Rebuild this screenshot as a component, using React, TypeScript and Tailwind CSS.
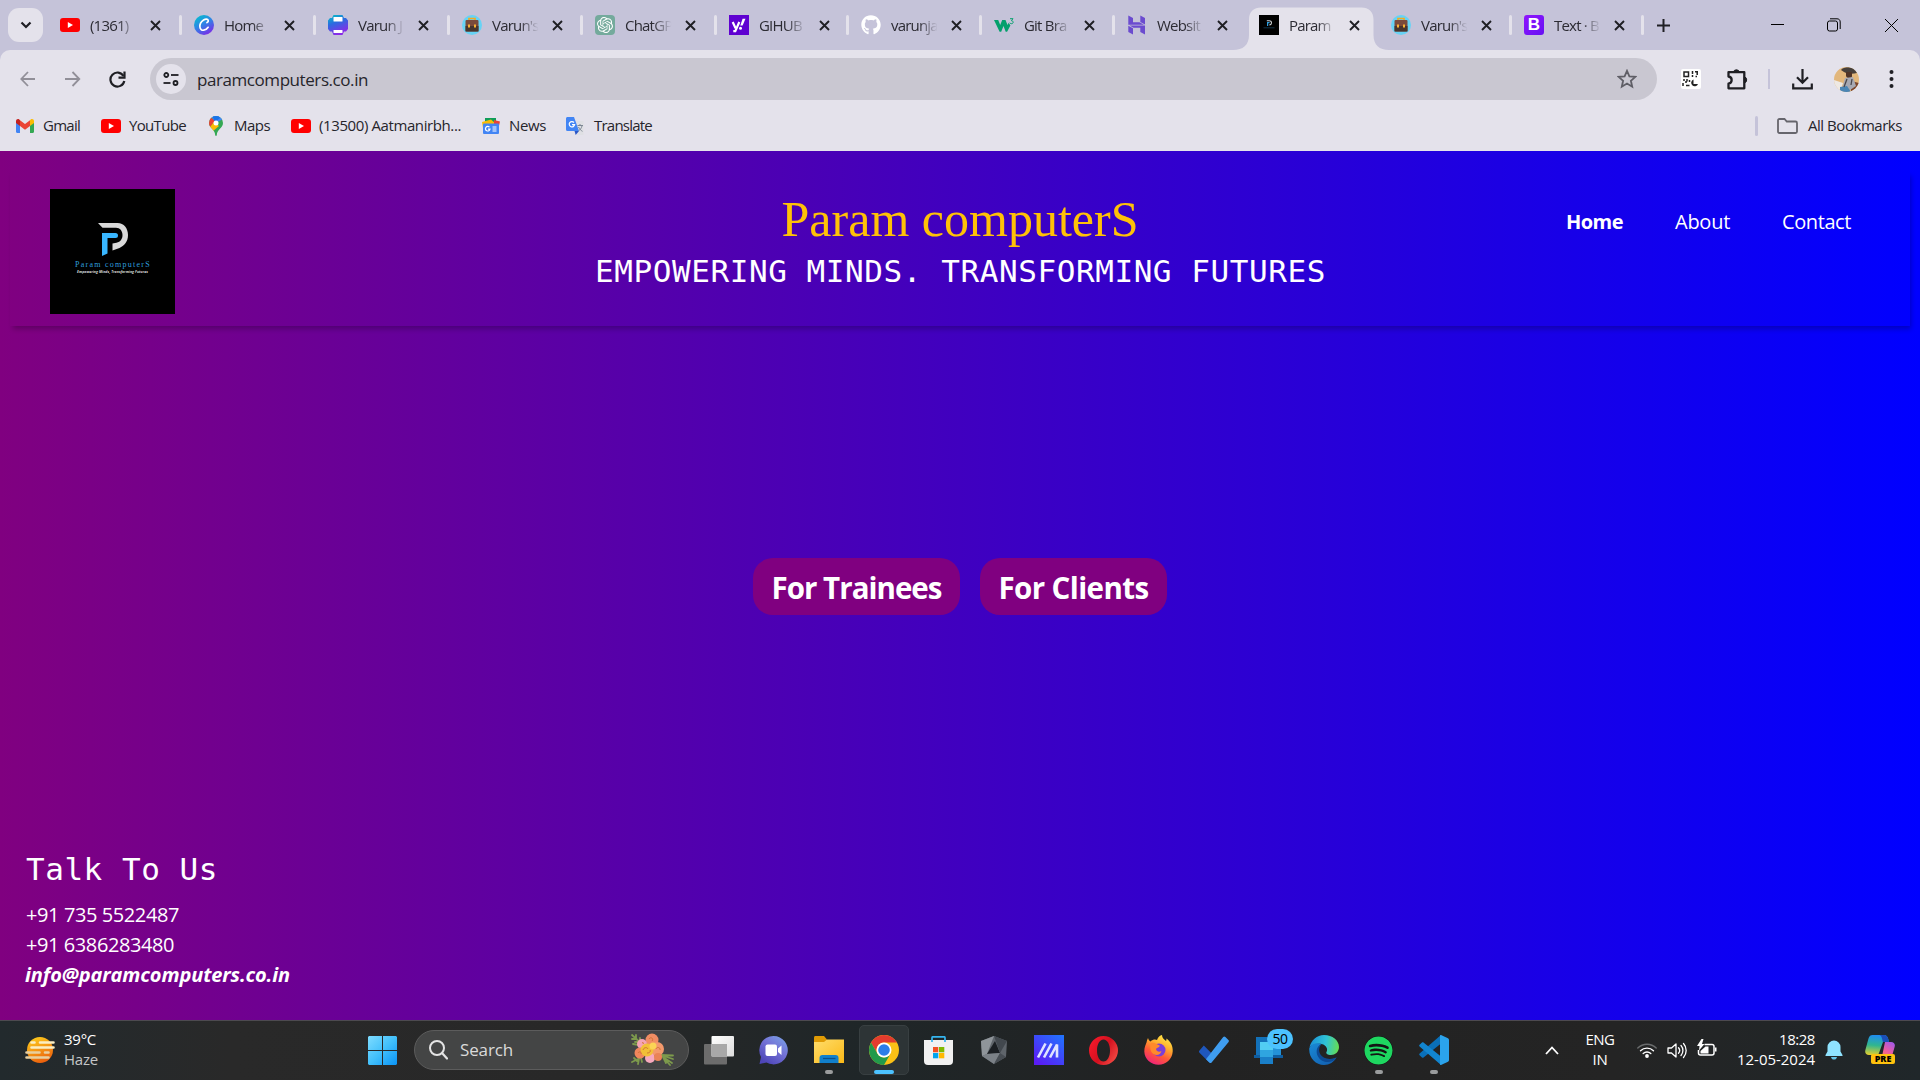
import React, { useLayoutEffect, useRef } from "react";
import { FaGithub, FaSpotify } from "react-icons/fa";
import { SiOpenai } from "react-icons/si";

/** Text whose letter spacing is adjusted so that it takes exactly `w` pixels. */
function Fit({ w, children, className = "" }: { w: number; children: string; className?: string }) {
  const ref = useRef<HTMLSpanElement>(null);
  useLayoutEffect(() => {
    const el = ref.current;
    if (!el) return;
    el.style.letterSpacing = "0px";
    const natural = el.getBoundingClientRect().width;
    el.style.letterSpacing = `${(w - natural) / children.length}px`;
  }, [w, children]);
  return (
    <span ref={ref} className={`inline-block whitespace-pre ${className}`}>
      {children}
    </span>
  );
}

/* ---------- favicons ---------- */

const YouTube = () => (
  <svg width="20" height="20" viewBox="0 0 20 20">
    <rect x="0" y="3" width="20" height="14" rx="3" fill="#f00" />
    <path d="M7.8 7v6l5.2-3z" fill="#fff" />
  </svg>
);

const Canva = () => (
  <svg width="20" height="20" viewBox="0 0 20 20">
    <defs>
      <linearGradient id="cv" x1="0.1" y1="0" x2="0.7" y2="1">
        <stop offset="0" stopColor="#00c4cc" />
        <stop offset="0.5" stopColor="#2f83e6" />
        <stop offset="1" stopColor="#7d2ae8" />
      </linearGradient>
    </defs>
    <circle cx="10" cy="10" r="10" fill="url(#cv)" />
    <path d="M13 7.600c1-.5 1.500-1.400 1.200-2.300-.5-1.400-2.600-1.600-4.600-.3C7 6.700 5.600 9.500 5.900 12c.2 2.200 1.900 3.500 3.800 3.200 1.900-.2 3.500-1.400 4.400-2.900" fill="none" stroke="#fff" strokeWidth="1.700" strokeLinecap="round" />
  </svg>
);

const Printer = () => (
  <svg width="20" height="20" viewBox="0 0 20 20">
    <defs>
      <linearGradient id="pr" x1="0" y1="0" x2="0.4" y2="1">
        <stop offset="0" stopColor="#00c9c4" />
        <stop offset="0.45" stopColor="#2b6be0" />
        <stop offset="1" stopColor="#8a2be8" />
      </linearGradient>
    </defs>
    <path d="M5.500 0h9l1.500 3h2l2 2.500v8.500l-2 2.500h-2l-1.500 3.500h-9L4 16.500H2l-2-2.500V5.500L2 3h2z" fill="url(#pr)" />
    <rect x="5.500" y="2" width="9" height="4.500" rx="0.600" fill="#fff" />
    <rect x="5.500" y="15" width="9" height="3" rx="0.600" fill="#fff" />
  </svg>
);

const Briefcase = () => (
  <svg width="20" height="20" viewBox="0 0 20 20">
    <circle cx="10" cy="10" r="10" fill="#67d3f5" />
    <path d="M7 5.500V3.500h6v2" fill="none" stroke="#f6a821" strokeWidth="1.600" />
    <rect x="3.500" y="5" width="13" height="11.500" rx="1" fill="#7a4a3c" />
    <rect x="3.500" y="11" width="13" height="5.500" fill="#47352f" />
    <rect x="6" y="9.500" width="2" height="3" fill="#f9b233" />
    <rect x="12" y="9.500" width="2" height="3" fill="#f9b233" />
  </svg>
);

const Chat = () => (
  <div className="flex h-5 w-5 items-center justify-center rounded-[4px] bg-[#74aa9c]">
    <SiOpenai size={16} color="#fff" />
  </div>
);

const Yahoo = () => (
  <svg width="20" height="20" viewBox="0 0 20 20">
    <rect width="20" height="20" fill="#5f01d1" />
    <path d="M3.700 7l2.900 6.200M10.300 7L6.300 16.200H4.300" fill="none" stroke="#fff" strokeWidth="2.200" />
    <path d="M13.600 3.800h2.900l-2.900 6.800h-2.300z" fill="#fff" />
    <circle cx="11.500" cy="13.200" r="1.500" fill="#fff" />
  </svg>
);

const W3 = () => (
  <svg width="20" height="20" viewBox="0 0 20 20">
    <path d="M0 5h4.200l2 5 2-5h3.300l2 5 1.200-2.200 1.700 2.700-3.300 6.200h-1.400L9.500 11l-2.300 5.700H5.600z" fill="#04a06c" />
    <path d="M16 3.700h3l-1.600 2c2.500.1 2.200 3.200-.1 3-.8 0-1.300-.5-1.500-1" fill="none" stroke="#04a06c" strokeWidth="1" />
  </svg>
);

const Hostinger = () => (
  <svg width="20" height="20" viewBox="0 0 20 20">
    <path d="M1.300.5l4.700 2.500v4.300h6.500l4.500 2.400H1.300zM13.300.5l4.700 2.400v6.600L13.300 7z" fill="#6b4bcf" />
    <path d="M18 19.500L13.300 17v-4.300H6.500L2.500 10.600H18zM6 19.500L1.300 17v-6.200L6 13.200z" fill="#6b4bcf" />
  </svg>
);

const ParamIcon = () => (
  <svg width="20" height="20" viewBox="0 0 20 20">
    <rect width="20" height="20" fill="#000" />
    <path d="M7.800 5.700h2.600a2 2 0 0 1 0 4.200" fill="none" stroke="#cfd3d6" strokeWidth="1.100" />
    <path d="M8.600 11V7.700h2" fill="none" stroke="#2e9fe0" strokeWidth="1.200" />
    <path d="M4.500 12.800h11" stroke="#17405a" strokeWidth="0.800" />
  </svg>
);

const Bootstrap = () => (
  <div className="flex h-5 w-5 items-center justify-center rounded-[3px] bg-gradient-to-br from-[#9013fe] to-[#6610f2] font-['Liberation_Sans',sans-serif] text-[17px] leading-5 font-bold text-white">
    B
  </div>
);

const TABS: { w: string; t: string; icon: React.ReactNode; active?: boolean; sep?: boolean }[] = [
  { w: "w-[134px]", t: "(1361)", icon: <YouTube />, sep: true },
  { w: "w-[134px]", t: "Home", icon: <Canva />, sep: true },
  { w: "w-[134px]", t: "Varun J", icon: <Printer />, sep: true },
  { w: "w-[133px]", t: "Varun's", icon: <Briefcase />, sep: true },
  { w: "w-[134px]", t: "ChatGP", icon: <Chat />, sep: true },
  { w: "w-[132px]", t: "GIHUB", icon: <Yahoo />, sep: true },
  { w: "w-[133px]", t: "varunja", icon: <FaGithub size={20} color="#fff" />, sep: true },
  { w: "w-[133px]", t: "Git Bra", icon: <W3 />, sep: true },
  { w: "w-[132px]", t: "Websit", icon: <Hostinger /> },
  { w: "w-[132px]", t: "Param", icon: <ParamIcon />, active: true },
  { w: "w-[133px]", t: "Varun's", icon: <Briefcase />, sep: true },
  { w: "w-[132px]", t: "Text · B", icon: <Bootstrap />, sep: true },
];

function Tab({ w, t, icon, active, sep }: (typeof TABS)[number]) {
  return (
    <div className={`relative flex h-[50px] shrink-0 items-center pl-[14px] ${w}`}>
      {active && (
        <svg className="absolute top-[7px] -left-[12px]" width="156" height="43" viewBox="0 0 156 43">
          <path d="M0 43c10 0 16-5 16-15V12.500c0-8 5-12 12-12h100.500c7 0 12 4 12 12V28c0 10 6 15 15.500 15z" fill="#e4e2eb" />
        </svg>
      )}
      <div className="relative flex h-5 w-5 items-center justify-center">{icon}</div>
      <div className="relative ml-[10px] w-[48px] text-[15px] leading-5 tracking-[-0.8px] whitespace-pre text-[#2c2b33] [mask-image:linear-gradient(to_right,#000_58%,transparent_97%)]">
        {t}
      </div>
      <svg className="relative ml-[12px]" width="11" height="11" viewBox="0 0 11 11">
        <path d="M1 1l9 9M10 1l-9 9" stroke="#1f1f24" strokeWidth="1.900" />
      </svg>
      {sep && <div className="absolute top-[15px] right-[-2px] h-5 w-[3px] rounded-full bg-[#e4e2eb]" />}
    </div>
  );
}

function TabStrip() {
  return (
    <div className="flex h-[50px] items-center bg-[#c5c3d9]">
      <div className="ml-2 flex h-[34px] w-[35px] items-center justify-center rounded-[11px] bg-[#e4e2eb]">
        <svg width="12" height="8" viewBox="0 0 12 8">
          <path d="M1.500 1.500L6 6l4.500-4.500" fill="none" stroke="#1f1f24" strokeWidth="2.200" />
        </svg>
      </div>
      <div className="ml-[3px] flex">
        {TABS.map((tab, i) => (
          <Tab key={i} {...tab} />
        ))}
      </div>
      <svg className="ml-[15px]" width="13" height="13" viewBox="0 0 13 13">
        <path d="M6.500 0v13M0 6.500h13" stroke="#1f1f24" strokeWidth="2" />
      </svg>
      <div className="ml-auto flex items-center pr-[22px]">
        <svg width="13" height="14" viewBox="0 0 13 14">
          <path d="M0 6.500h13" stroke="#000" />
        </svg>
        <svg className="ml-[43px]" width="14" height="14" viewBox="0 0 14 14">
          <rect x="0.500" y="3" width="10" height="10" rx="2" fill="none" stroke="#000" />
          <path d="M3 .8h7c2 0 3.200 1.200 3.200 3.200v7" fill="none" stroke="#000" />
        </svg>
        <svg className="ml-[44px]" width="13" height="13" viewBox="0 0 13 13">
          <path d="M0 0l13 13M13 0L0 13" stroke="#000" />
        </svg>
      </div>
    </div>
  );
}

function Toolbar() {
  return (
    <div className="flex h-[58px] items-center rounded-t-[10px] bg-[#e4e2eb]">
      <svg className="ml-5" width="16" height="16" viewBox="0 0 16 16">
        <path d="M15 8H1.500M8 1L1.300 8 8 15" fill="none" stroke="#918f98" strokeWidth="1.800" />
      </svg>
      <svg className="ml-[29px]" width="16" height="16" viewBox="0 0 16 16">
        <path d="M0 8h14M7.500 1l6.800 7-6.800 7" fill="none" stroke="#918f98" strokeWidth="1.800" />
      </svg>
      <svg className="ml-[28px]" width="17" height="17" viewBox="0 0 17 17">
        <path d="M14.500 5A7 7 0 1 0 15.300 10" fill="none" stroke="#1f1f24" strokeWidth="2.200" />
        <path d="M15.500 .5v6.200H9.500" fill="none" stroke="#1f1f24" strokeWidth="2.200" />
      </svg>
      <div className="ml-6 flex h-[42px] w-[1507px] items-center rounded-full bg-[#c9c7d1] pr-5 pl-[6px]">
        <div className="flex h-[30px] w-[30px] items-center justify-center rounded-full bg-[#e4e2eb]">
          <svg width="16" height="14" viewBox="0 0 16 14">
            <g fill="none" stroke="#1f1f24" strokeWidth="1.800">
              <circle cx="3.300" cy="3" r="2" />
              <path d="M8 3h7.500" />
              <circle cx="12.500" cy="11" r="2" />
              <path d="M0.500 11h7" />
            </g>
          </svg>
        </div>
        <Fit w={171} className="mt-px ml-[11px] text-[17px] leading-6 text-[#26252b]">paramcomputers.co.in</Fit>
        <svg className="ml-auto" width="20" height="20" viewBox="0 0 20 20">
          <path d="M10 1.800l2.400 5.500 6 .5-4.500 4 1.300 5.900-5.200-3.100-5.200 3.100 1.300-5.900-4.500-4 6-.5z" fill="none" stroke="#5f5e66" strokeWidth="1.800" />
        </svg>
      </div>
      <svg className="ml-6" width="20" height="20" viewBox="0 0 20 20">
        <rect width="20" height="20" rx="2" fill="#fff" />
        <g fill="none" stroke="#222" strokeWidth="1.500">
          <rect x="3" y="3" width="4.500" height="4.500" />
          <path d="M11.500 2v3M11.500 6v2M14 2.800h3M16.200 3v3M14.500 7.500h1.500M2 11h2M6 10v2.500M8.500 11v2M2 14v3M4 13h2M5 16.500h3.500" />
        </g>
        <path d="M12.500 10.500a3.500 3.500 0 1 0 4.500 4.500h-4.500z" fill="#222" />
      </svg>
      <svg className="ml-[25px]" width="24" height="24" viewBox="0 0 24 24">
        <path d="M2.500 5.200h15.800v16.100H2.500v-4.600c4.200-.8 4.200-6.600 0-7.200z" fill="none" stroke="#1f1f24" strokeWidth="2.300" strokeLinejoin="round" />
        <path d="M7.300 5.200a3.200 3.200 0 0 1 6.200 0zM18.300 9.800a3.200 3.200 0 0 1 0 6.200z" fill="#1f1f24" stroke="#1f1f24" />
      </svg>
      <div className="ml-[18px] h-5 w-[2px] bg-[#c5c3d9]" />
      <svg className="ml-[22px]" width="21" height="21" viewBox="0 0 21 21">
        <path d="M10.500 0v13M5 8.200l5.500 5.500L16 8.200M1.200 14.500v4.800h18.600v-4.800" fill="none" stroke="#1f1f24" strokeWidth="2.200" />
      </svg>
      <svg className="ml-[21px]" width="25" height="25" viewBox="0 0 25 25">
        <defs>
          <clipPath id="av"><circle cx="12.500" cy="12.500" r="12.500" /></clipPath>
        </defs>
        <g clipPath="url(#av)">
          <rect width="25" height="25" fill="#e2b77c" />
          <path d="M0 13l9 3-3 9H0z" fill="#eee9e4" />
          <path d="M17 14l8 2v9h-8z" fill="#7b452c" />
          <path d="M7 3C9 0 18-1 22 3l1 3c-4 1-10 1-13-1z" fill="#463f3a" />
          <path d="M12 5h6v4c0 3-5 3-6 0z" fill="#4f3428" />
          <path d="M11 11l8-1 3 9-6 4-8-1z" fill="#a7a9b3" />
          <path d="M6 20l7-1 4 6H6z" fill="#4b86b5" />
          <path d="M13 12l-3 8M18 12l-1 6" stroke="#4a474d" strokeWidth="1.300" />
        </g>
      </svg>
      <svg className="ml-[30px]" width="5" height="18" viewBox="0 0 5 18">
        <circle cx="2.500" cy="2" r="2" fill="#1f1f24" />
        <circle cx="2.500" cy="9" r="2" fill="#1f1f24" />
        <circle cx="2.500" cy="16" r="2" fill="#1f1f24" />
      </svg>
    </div>
  );
}

const Gmail = () => (
  <svg width="18" height="14" viewBox="0 0 18 14">
    <path d="M0 2v10.800c0 .7.500 1.200 1.200 1.200H4V6z" fill="#4285f4" />
    <path d="M18 2v10.800c0 .7-.500 1.200-1.200 1.200H14V6z" fill="#34a853" />
    <path d="M14 1.300V7l4-3V2c0-1.800-2-2.500-3.300-1.500z" fill="#fbbc04" />
    <path d="M4 7V1.300L9 5l5-3.700V7l-5 3.700z" fill="#ea4335" />
    <path d="M0 2v2l4 3V1.300L3.300.5C2-.5 0 .2 0 2z" fill="#c5221f" />
  </svg>
);

const Maps = () => (
  <svg width="14" height="20" viewBox="0 0 14 20">
    <defs>
      <clipPath id="pin"><path d="M7 0a7 7 0 0 1 7 7c0 5-6 6.500-6.200 12-.1 1.300-1.500 1.300-1.600 0C6 13.500 0 12 0 7a7 7 0 0 1 7-7z" /></clipPath>
    </defs>
    <g clipPath="url(#pin)">
      <rect width="14" height="20" fill="#34a853" />
      <path d="M0 0h14v3L7 7 3 2z" fill="#4285f4" />
      <path d="M0 0l6 5-5 6-3-3z" fill="#ea4335" />
      <path d="M3-1l7-1 1 4-5 4z" fill="#1a73e8" />
      <path d="M1 11l4-5 5 4-7 6z" fill="#fbbc04" />
    </g>
    <circle cx="7" cy="7" r="2.500" fill="#fff" />
  </svg>
);

const News = () => (
  <svg width="18" height="16" viewBox="0 0 18 16">
    <rect x="3" y="0" width="11" height="7" fill="#0f9d58" />
    <path d="M0 4l9-2.500 4 3.500v3l-12 2z" fill="#fbbc04" />
    <path d="M12 2l6 1.500L16.500 10 12 6z" fill="#ea4335" />
    <rect x="1" y="5.500" width="16" height="10.500" rx="1" fill="#4285f4" />
    <path d="M7.500 9.200a2.300 2.300 0 1 0 .5 2H6M10.500 9h4M10.500 11h4M10.500 13h4" fill="none" stroke="#fff" strokeWidth="1.200" />
  </svg>
);

const Translate = () => (
  <svg width="18" height="18" viewBox="0 0 18 18">
    <path d="M8 4h9.500v14H11z" fill="#dfe0e4" />
    <path d="M0 1.500C0 .7.700 0 1.500 0H8l5 14H1.500A1.500 1.500 0 0 1 0 12.500z" fill="#4285f4" />
    <path d="M8.500 14H13l-3.300 4z" fill="#2a56c6" />
    <path d="M8 5.500A2.700 2.700 0 1 0 8.600 7.700H6" fill="none" stroke="#fff" strokeWidth="1.200" />
    <path d="M11.500 8.500h5.500M14 7v1.500M16 9c-.5 2-2 4-3.500 5M12.500 10c1 2 2.500 3.500 4 4.300" fill="none" stroke="#7e8894" strokeWidth="1" />
  </svg>
);

function Bookmarks() {
  const t = "-mt-[2px] text-[15px] leading-5";
  return (
    <div className="flex h-[43px] items-center bg-[#e4e2eb] pb-[8px] text-[#26252b]">
      <div className="flex w-[85px] items-center pl-4"><Gmail /><Fit w={37} className={`ml-[9px] ${t}`}>Gmail</Fit></div>
      <div className="flex w-[108px] items-center pl-4"><YouTube /><Fit w={57} className={`ml-2 ${t}`}>YouTube</Fit></div>
      <div className="flex w-[82px] items-center pl-4"><Maps /><Fit w={36} className={`ml-[11px] ${t}`}>Maps</Fit></div>
      <div className="flex w-[191px] items-center pl-4"><YouTube /><Fit w={142} className={`ml-2 ${t}`}>(13500) Aatmanirbh...</Fit></div>
      <div className="flex w-[84px] items-center pl-4"><News /><Fit w={37} className={`ml-[9px] ${t}`}>News</Fit></div>
      <div className="flex items-center pl-4"><Translate /><Fit w={58} className={`ml-[10px] ${t}`}>Translate</Fit></div>
      <div className="ml-auto flex items-center pr-[18px]">
        <div className="h-5 w-[3px] rounded-full bg-[#c5c3d9]" />
        <svg className="ml-[19px]" width="21" height="16" viewBox="0 0 21 16">
          <path d="M1 2.500C1 1.500 1.500 1 2.500 1h5l2.300 2.500h8.700c1 0 1.500.5 1.500 1.500v8.500c0 1-.5 1.500-1.500 1.500h-16c-1 0-1.500-.5-1.500-1.500z" fill="none" stroke="#66656c" strokeWidth="1.800" />
        </svg>
        <Fit w={94} className={`ml-[10px] ${t}`}>All Bookmarks</Fit>
      </div>
    </div>
  );
}

/* ---------- web page ---------- */

function Logo() {
  return (
    <div className="relative h-[125px] w-[125px] bg-black">
      <svg className="absolute inset-0" width="125" height="125" viewBox="0 0 125 125">
        <path d="M48 34h19.500C74 34 78 39.500 78 46c0 7-4 10.500-8.500 13L62.500 61.500V54.500l4-.7c4-1 6-4 6-7.800 0-4-2.500-7.200-6.500-7.200H52.500z" fill="#d9d9d9" />
        <path d="M52 44h13.500a2.400 2.400 0 0 1 0 5H57.500v15.500L52 67z" fill="#38b6ff" />
      </svg>
      <div className="absolute top-[71px] left-[25px] font-['Liberation_Serif',serif] text-[8px] leading-[9px] text-[#2f9fdf]">
        <Fit w={76}>Param computerS</Fit>
      </div>
      <div className="absolute top-[80px] left-[27px] font-['Open_Sans',sans-serif] text-[3.500px] leading-[5px] font-bold text-[#d9d9d9] italic">
        <Fit w={71}>Empowering Minds, Transforming Futures</Fit>
      </div>
    </div>
  );
}

function WebPage() {
  return (
    <main className="flex h-[869px] flex-col bg-[linear-gradient(to_right,#800080,#0000ff)] px-[10px] pt-5 text-white">
      <header className="grid h-[155px] grid-cols-[1fr_auto_1fr] pt-[18px] shadow-[2px_4px_5px_-1px_rgba(0,0,0,0.24)]">
        <div className="pl-10"><Logo /></div>
        <div className="flex flex-col items-center">
          <h1 className="font-['Liberation_Serif',serif] text-[50px] leading-[60px] text-[#ffc107]">
            <Fit w={357}>Param computerS</Fit>
          </h1>
          <p className="mt-px ml-px font-['DejaVu_Sans_Mono',monospace] text-[31px] leading-[42px]">
            <Fit w={731}>EMPOWERING MINDS. TRANSFORMING FUTURES</Fit>
          </p>
        </div>
        <nav className="flex justify-end pt-[18px] text-[20px] leading-[30px]">
          <a className="w-[109px] font-bold"><Fit w={57}>Home</Fit></a>
          <a className="w-[107px]"><Fit w={55}>About</Fit></a>
          <a className="w-[128px]"><Fit w={69}>Contact</Fit></a>
        </nav>
      </header>
      <section className="mt-[232px] flex justify-center gap-5 text-[29.500px] leading-[59px] font-bold">
        <button className="flex h-[57px] w-[207px] justify-center rounded-[20px] bg-[#800080]"><Fit w={170}>For Trainees</Fit></button>
        <button className="flex h-[57px] w-[187px] justify-center rounded-[20px] bg-[#800080]"><Fit w={150}>For Clients</Fit></button>
      </section>
      <footer className="mt-auto flex flex-col items-start pb-[30px] pl-[16px] text-[20px] leading-[30px]">
        <h2 className="mb-[10px] -mt-px font-['DejaVu_Sans_Mono',monospace] text-[31px] leading-[42px]"><Fit w={192}>Talk To Us</Fit></h2>
        <Fit w={153}>+91 735 5522487</Fit>
        <Fit w={148}>+91 6386283480</Fit>
        <Fit w={265} className="-ml-px font-bold italic">info@paramcomputers.co.in</Fit>
      </footer>
    </main>
  );
}

/* ---------- taskbar icons ---------- */

const Haze = () => (
  <svg width="30" height="26" viewBox="0 0 30 26">
    <defs>
      <linearGradient id="hz" x1="0.300" y1="0" x2="0.700" y2="1">
        <stop offset="0" stopColor="#fdc91c" />
        <stop offset="1" stopColor="#ea5a0c" />
      </linearGradient>
    </defs>
    <circle cx="15" cy="13" r="13" fill="url(#hz)" />
    <g strokeWidth="2.600" strokeLinecap="round">
      <path d="M6.500 5.500h3M15 5.500h13.500M6.500 10.500h22" stroke="#fbeec2" />
      <path d="M1.500 15.500h13M20 15.500h3.500M1.500 20.500h22" stroke="#e8cfa0" />
    </g>
  </svg>
);

const Start = () => (
  <svg width="29" height="29" viewBox="0 0 29 29">
    <defs>
      <linearGradient id="wn" x1="0" y1="0" x2="29" y2="29" gradientUnits="userSpaceOnUse">
        <stop offset="0" stopColor="#7fdcff" />
        <stop offset="0.500" stopColor="#42c0fb" />
        <stop offset="1" stopColor="#0a93f5" />
      </linearGradient>
    </defs>
    <path d="M1 0h13v14H0V1zM15 0h13l1 1v13H15zM0 15h14v14H1l-1-1zM15 15h14v13l-1 1H15z" fill="url(#wn)" />
  </svg>
);

const Bouquet = () => (
  <svg width="46" height="34" viewBox="0 0 46 34">
    <g stroke="#7d9a4c" strokeWidth="1.800" fill="none" strokeLinecap="round">
      <path d="M2 2l12 11M2 6h4M6 2v4M5 9h4M10 5v4M9 12h4M3 11l6 1" />
      <path d="M2 29l10-5M4 25l3 3M8 31l1-5M12 29l-1-4" />
      <path d="M30 22l13 .5M30 22l13 4M30 22l12 8M31 22l9 10M33 24l3 6" />
    </g>
    <circle cx="22" cy="7" r="6.500" fill="#f08d63" />
    <circle cx="12" cy="11" r="5" fill="#f5a3b4" />
    <circle cx="27" cy="16" r="7" fill="#f3996c" />
    <circle cx="10" cy="20" r="5.500" fill="#f0865c" />
    <circle cx="20" cy="25" r="5" fill="#f7a9bd" />
    <circle cx="28" cy="24" r="4" fill="#ea8357" />
    <circle cx="17" cy="17" r="6.500" fill="#f2c037" />
    <circle cx="23" cy="13" r="3.500" fill="#fbd455" />
    <path d="M13 17c1-3 4-3 5-1M17 20c2 0 4-1 3-3M19 6c2-3 5 0 3 2M26 16c1-3 5-1 4 1M8 20c1-2 4-1 3 1M12 10c1-1 2 0 1 1" stroke="#cf7434" fill="none" />
  </svg>
);

const TaskView = () => (
  <svg width="30" height="29" viewBox="0 0 30 29">
    <defs>
      <linearGradient id="tv" x1="0" y1="0" x2="1" y2="1">
        <stop offset="0" stopColor="#fff" />
        <stop offset="1" stopColor="#dcdcdc" />
      </linearGradient>
    </defs>
    <rect x="0" y="8" width="23" height="20.500" rx="1" fill="#6c6c6c" />
    <rect x="7.500" y="0" width="22.500" height="20.500" rx="1" fill="url(#tv)" />
    <rect x="7.500" y="8" width="15.500" height="12.500" fill="#a8a8a8" />
  </svg>
);

const Meet = () => (
  <svg width="29" height="29" viewBox="0 0 29 29">
    <defs>
      <linearGradient id="mt" x1="1" y1="0" x2="0.300" y2="1">
        <stop offset="0" stopColor="#7aa7e8" />
        <stop offset="0.500" stopColor="#7472d6" />
        <stop offset="1" stopColor="#4d45b8" />
      </linearGradient>
    </defs>
    <path d="M14.500 0a14.200 14.200 0 1 1-7 26.500L.5 28l1.500-7A14.200 14.200 0 0 1 14.500 0z" fill="url(#mt)" />
    <rect x="6.500" y="8.500" width="11.500" height="11.500" rx="2" fill="#fff" />
    <path d="M19 12.500l3.500-3v9.500L19 16z" fill="#fff" />
  </svg>
);

const Folder = () => (
  <svg width="30" height="28" viewBox="0 0 30 28">
    <defs>
      <linearGradient id="fd" x1="0" y1="0" x2="1" y2="1">
        <stop offset="0" stopColor="#ffdd6b" />
        <stop offset="1" stopColor="#fbb917" />
      </linearGradient>
    </defs>
    <path d="M0 1.500C0 .7.500 0 1.500 0H10l3 3.500V10H0z" fill="#e09b05" />
    <path d="M0 6h10l3-2.500h17V27H0z" fill="url(#fd)" />
    <path d="M5.500 27v-5a3 3 0 0 1 3-3h13a3 3 0 0 1 3 3v5z" fill="#1180cc" />
    <path d="M9 22.500h12.500" stroke="#0b4f8c" strokeWidth="1.300" />
  </svg>
);

const Chrome = () => (
  <svg width="30" height="30" viewBox="0 0 48 48">
    <circle cx="24" cy="24" r="24" fill="#fbc116" />
    <path d="M3.220 12A24 24 0 0 1 44.780 12H24A12 12 0 0 0 13.600 30z" fill="#e33b2e" />
    <path d="M3.220 12A24 24 0 0 0 24 48L34.400 30A12 12 0 0 1 13.600 30z" fill="#229a4b" />
    <circle cx="24" cy="24" r="12" fill="#fff" />
    <circle cx="24" cy="24" r="9.300" fill="#2b7de9" />
  </svg>
);

const Store = () => (
  <svg width="29" height="29" viewBox="0 0 29 29">
    <path d="M0 4h29v21a4 4 0 0 1-4 4H4a4 4 0 0 1-4-4z" fill="#f1f1f1" />
    <path d="M8 6V1.800C8 1 8.500.800 9 .800h11c.6 0 1 .2 1 1V6" fill="none" stroke="#35b5ef" strokeWidth="1.700" />
    <rect x="9" y="11" width="5.300" height="5.300" fill="#f25022" />
    <rect x="15" y="11" width="5.300" height="5.300" fill="#7fba00" />
    <rect x="9" y="17" width="5.300" height="5.300" fill="#00a4ef" />
    <rect x="15" y="17" width="5.300" height="5.300" fill="#ffb900" />
  </svg>
);

const Crate = () => (
  <svg width="26" height="28" viewBox="0 0 26 28">
    <path d="M13 0l13 5-1 16-12 7L1 20 0 5z" fill="#5f656b" />
    <path d="M13 0L0 5l1 15 5-2z" fill="#8f959a" />
    <path d="M14 5l5 12-13 1z" fill="#1b1f23" />
    <path d="M13 0l13 5-7 12z" fill="#42484e" />
    <path d="M1 20l5-2 13-1-6 11z" fill="#7b8187" />
    <path d="M19 17l6 4-12 7z" fill="#474d53" />
  </svg>
);

const MyAsus = () => (
  <svg width="30" height="30" viewBox="0 0 30 30">
    <defs>
      <linearGradient id="ma" x1="1" y1="0" x2="0.200" y2="1">
        <stop offset="0" stopColor="#1f76ff" />
        <stop offset="1" stopColor="#5a1cf5" />
      </linearGradient>
    </defs>
    <rect width="30" height="30" fill="url(#ma)" />
    <g fill="none" stroke="#dfe3ff" strokeWidth="2.600">
      <path d="M4 22.500L11.500 8.500M10 22.500l7.500-14" />
      <path d="M16 22.500l7-13v13" />
    </g>
  </svg>
);

const Opera = () => (
  <svg width="29" height="29" viewBox="0 0 29 29">
    <defs>
      <linearGradient id="op" x1="0" y1="0" x2="1" y2="0.600">
        <stop offset="0" stopColor="#ff1b2d" />
        <stop offset="0.600" stopColor="#d3101f" />
        <stop offset="1" stopColor="#f0433f" />
      </linearGradient>
    </defs>
    <path fillRule="evenodd" d="M14.500 0a14.500 14.500 0 1 1 0 29 14.500 14.500 0 0 1 0-29zm0 3.500c-4 0-6.500 5-6.500 11s2.500 11 6.500 11 6.500-5 6.500-11-2.500-11-6.500-11z" fill="url(#op)" />
  </svg>
);

const Firefox = () => (
  <svg width="29" height="30" viewBox="0 0 29 30">
    <defs>
      <linearGradient id="ff" x1="0.800" y1="0" x2="0.300" y2="1">
        <stop offset="0" stopColor="#fff04a" />
        <stop offset="0.350" stopColor="#ffb02e" />
        <stop offset="0.650" stopColor="#ff5a36" />
        <stop offset="1" stopColor="#f0217c" />
      </linearGradient>
    </defs>
    <path d="M4 3c.5 2 1.500 3 2.500 3.500C9 4 12 4.500 13 5c1-3 3-4.500 5-5 0 3 2 4 4 6 .5-.8.5-1.500.4-2.500C27 7 29 11 28.700 16.500 28.300 24 22 29.700 14.500 29.700S.5 24 .3 16.500C.2 12 2 9.500 2.500 7.500c.3-1.700.7-3 1.500-4.500z" fill="url(#ff)" />
    <circle cx="15" cy="15" r="6.500" fill="#7a3fd8" />
    <path d="M7 8c3-1 5 .5 6.500 1.500 2 .5 2.500 1 2 2-1 1.200-3 1-3.500 2.500.5 2.500 3 3.500 5.500 2-1 4-5 5-8 3S5.500 13 7 8z" fill="#ff8a2a" />
  </svg>
);

const Todo = () => (
  <svg width="30" height="28" viewBox="0 0 30 28">
    <path d="M4.800 9.500l9.700 9.700-4.200 7.300L.5 16.700c-.7-.7-.7-1.500 0-2.200z" fill="#1f57bd" />
    <path d="M24.200 1c.7-.7 1.500-.7 2.200 0l3 3c.7.700.7 1.500 0 2.200L12.600 26.500c-.7.800-1.600.8-2.300 0L7 23.200z" fill="#3f9df0" />
  </svg>
);

const Phone = () => (
  <svg width="30" height="28" viewBox="0 0 30 28">
    <path d="M2 1h16v20H2z" fill="#1371b9" />
    <path d="M0 19h29v3H0z" fill="#0f5da0" />
    <path d="M6 6h13v8H6z" fill="#52cdf3" />
    <path d="M6 14h13v7H6z" fill="#2fa5e0" />
    <path d="M6 21h13v7H6z" fill="#1a7fc8" />
    <path d="M19 9h8v10h-8z" fill="#2492d8" />
  </svg>
);

const Edge = () => (
  <svg width="30" height="30" viewBox="0 0 30 30">
    <defs>
      <linearGradient id="e1" x1="0" y1="0.400" x2="1" y2="0.500">
        <stop offset="0" stopColor="#1b8fd8" />
        <stop offset="0.550" stopColor="#2fc4d6" />
        <stop offset="1" stopColor="#66dd52" />
      </linearGradient>
      <linearGradient id="e2" x1="0" y1="0" x2="0.800" y2="1">
        <stop offset="0" stopColor="#1a8ad6" />
        <stop offset="1" stopColor="#1260b0" />
      </linearGradient>
    </defs>
    <path d="M.5 12.500C2 5 8 0 15 0c8.500 0 15 5.500 15 12 0 5-4 8-8 8-3.500 0-5.500-1.500-4.500-3 1.500-2 .5-7-5-8C7.500 8 2.500 10 .5 12.500z" fill="url(#e1)" />
    <path d="M.3 13C3 8.500 8 7.500 12.500 9 9 11 8.500 16 11 20c3 4.500 9.500 6 16.500 2.500C25 27 20.500 30 15 30 6.500 30-.5 22.500.3 13z" fill="url(#e2)" />
    <path d="M12.500 9c-5 2-6 8-3.500 12.500 2 3.800 6 5.500 9.500 5.500 4 0 7-1.500 9-4.500-7 3-13.500 1-16-3-2-3.500-1.800-7.500 1-10.500z" fill="#0c4a94" />
  </svg>
);

const VSCode = () => (
  <svg width="30" height="30" viewBox="0 0 30 30">
    <path d="M22 0v8.500L4.500 22.500c-.5.400-1 .4-1.500 0L.6 20.300c-.6-.5-.6-1.200 0-1.700z" fill="#0a6fb8" />
    <path d="M22 30v-8.500L4.500 7.500c-.5-.4-1-.4-1.500 0L.6 9.700c-.6.500-.6 1.200 0 1.700z" fill="#1285cf" />
    <path d="M22 0l7 3.300c.6.300 1 .9 1 1.500v20.400c0 .6-.4 1.200-1 1.500L22 30c-.8 0-1-.5-1-1V1c0-.5.200-1 1-1z" fill="#2ba3ec" />
  </svg>
);

const Copilot = () => (
  <div className="relative h-[30px] w-[30px]">
    <svg width="30" height="28" viewBox="0 0 30 28">
      <defs>
        <linearGradient id="c1" x1="0.300" y1="0" x2="0.200" y2="1">
          <stop offset="0" stopColor="#1f8df0" />
          <stop offset="0.500" stopColor="#30b68f" />
          <stop offset="1" stopColor="#e5cf2d" />
        </linearGradient>
        <linearGradient id="c2" x1="0.800" y1="0" x2="0.300" y2="1">
          <stop offset="0" stopColor="#a259e8" />
          <stop offset="0.500" stopColor="#ee5c9f" />
          <stop offset="1" stopColor="#fd8a52" />
        </linearGradient>
      </defs>
      <path d="M7.500 0H19c3 0 4 2 5 7h-6l-4 11c-.6 1.500-1.500 2-3 2H4c-3 0-4.500-2-3.500-5.500l3-11C4.300 1 5.500 0 7.500 0z" fill="url(#c1)" />
      <path d="M14.500 0H19c3 0 4 2 5 7h-6c-1-3-1-6-3.500-7z" fill="#1a4fb8" />
      <path d="M20 7h6c3 0 4.500 2 3.600 5L27 21c-.8 3-2 5-5 5h-8c2-1 2.500-3 3.500-7z" fill="url(#c2)" />
    </svg>
    <div className="absolute top-[19px] left-[6px] flex h-[10px] w-[24px] items-center justify-center rounded-[2px] bg-[#ffc20e] font-['Open_Sans',sans-serif] text-[9px] leading-[10px] font-extrabold text-black">
      PRE
    </div>
  </div>
);

const APPS: { icon: React.ReactNode; dot?: boolean; active?: boolean; badge?: string }[] = [
  { icon: <TaskView /> },
  { icon: <Meet /> },
  { icon: <Folder />, dot: true },
  { icon: <Chrome />, active: true },
  { icon: <Store /> },
  { icon: <Crate /> },
  { icon: <MyAsus /> },
  { icon: <Opera /> },
  { icon: <Firefox /> },
  { icon: <Todo /> },
  { icon: <Phone />, badge: "50" },
  { icon: <Edge /> },
  { icon: <FaSpotify size={29} color="#1ed760" className="rounded-full bg-[#141414]" />, dot: true },
  { icon: <VSCode />, dot: true },
];

function Taskbar() {
  return (
    <div className="flex h-[60px] items-center border-t border-[#4d4a50] bg-[linear-gradient(to_right,#222a2d,#292929_12%,#282828_30%,#1f2628_45%,#222222_62%,#242424_84%,#20272a)] pb-px text-[15px] leading-5 text-white">
      <div className="flex w-[355px] items-center pl-[25px]">
        <Haze />
        <div className="-mt-[2px] ml-[9px] flex flex-col items-start">
          <Fit w={32}>39°C</Fit>
          <Fit w={34} className="text-[#c4c6c7]">Haze</Fit>
        </div>
      </div>
      <div className="flex w-[55px] justify-center"><Start /></div>
      <div className="ml-1 flex h-10 w-[275px] items-center rounded-full border border-[#5c5c5c] bg-[#444545] pr-3 pl-[14px]">
        <svg width="19" height="20" viewBox="0 0 19 20">
          <circle cx="8" cy="8" r="7" fill="none" stroke="#e4e4e4" strokeWidth="2" />
          <path d="M13 13l5 5.500" stroke="#e4e4e4" strokeWidth="2.200" strokeLinecap="round" />
        </svg>
        <Fit w={53} className="ml-3 text-[17px] text-[#dadada]">Search</Fit>
        <div className="ml-auto"><Bouquet /></div>
      </div>
      <div className="ml-[2px] flex">
        {APPS.map((a, i) => (
          <div key={i} className="relative flex h-[58px] w-[55px] items-center justify-center">
            {a.active && <div className="absolute top-[4px] left-[3px] h-[50px] w-[50px] rounded-[5px] border border-[#383f41] bg-[#2d3436]" />}
            <div className="relative">{a.icon}</div>
            {a.dot && <div className="absolute top-[49px] left-[24px] h-1 w-2 rounded-full bg-[#9a9c9d]" />}
            {a.active && <div className="absolute top-[49px] left-[18px] h-1 w-5 rounded-full bg-[#4cc2ff]" />}
            {a.badge && (
              <div className="absolute top-[8px] left-[26px] flex h-5 w-[26px] items-center justify-center rounded-full bg-[#4cc2ff] text-[14px] tracking-[-0.5px] text-black">
                {a.badge}
              </div>
            )}
          </div>
        ))}
      </div>
      <div className="ml-auto flex items-center pr-[13px]">
        <div className="flex w-12 justify-center">
          <svg width="14" height="9" viewBox="0 0 14 9">
            <path d="M1 8l6-6.500L13 8" fill="none" stroke="#fff" strokeWidth="1.800" />
          </svg>
        </div>
        <div className="-mt-[2px] flex w-12 flex-col items-center"><Fit w={29}>ENG</Fit><Fit w={15}>IN</Fit></div>
        <div className="ml-2 flex w-[30px] justify-center">
          <svg width="20" height="16" viewBox="0 0 20 16">
            <g fill="none" strokeWidth="1.400" strokeLinecap="round">
              <path d="M.8 6a13 13 0 0 1 18.400 0" stroke="#6a6c6d" />
              <path d="M3.500 8.800a9.200 9.200 0 0 1 13 0M6.200 11.500a5.400 5.400 0 0 1 7.600 0" stroke="#fff" />
            </g>
            <circle cx="10" cy="14" r="1.900" fill="#fff" />
          </svg>
        </div>
        <div className="flex w-[30px] justify-center">
          <svg width="20" height="17" viewBox="0 0 20 17">
            <g fill="none" stroke="#fff" strokeWidth="1.300" strokeLinecap="round" strokeLinejoin="round">
              <path d="M1 6h3.500L9 2v13l-4.500-4H1z" />
              <path d="M11.500 5.800a4 4 0 0 1 0 5.400M14 3.500a7.500 7.500 0 0 1 0 10M16.500 1.500a10.500 10.500 0 0 1 0 14" />
            </g>
          </svg>
        </div>
        <div className="flex w-[30px] justify-center">
          <svg className="-mt-1" width="20" height="18" viewBox="0 0 20 18">
            <path d="M7.500 5.500H15a2 2 0 0 1 2 2V14a2 2 0 0 1-2 2H3.500a2 2 0 0 1-2-2v-3" fill="none" stroke="#fff" strokeWidth="1.500" />
            <path d="M18 8.500h1.500v4H18zM8.500 7.500h3v7H3.500v-2.500z" fill="#fff" />
            <path d="M4.500 0L0 7h2.500L2 11.500 7.500 5H5l1.500-5z" fill="#fff" />
          </svg>
        </div>
        <div className="-mt-[2px] flex w-[93px] flex-col items-end"><Fit w={36}>18:28</Fit><Fit w={78}>12-05-2024</Fit></div>
        <div className="flex w-[38px] justify-center">
          <svg width="18" height="20" viewBox="0 0 18 20">
            <path d="M9 .5A6.500 6.500 0 0 1 15.500 7v4.500L17.500 15v1H.5v-1l2-3.500V7A6.500 6.500 0 0 1 9 .5z" fill="#8fe3ff" />
            <path d="M6 17h6c-.3 1.700-1.500 2.600-3 2.600S6.300 18.700 6 17z" fill="#63c3e8" />
          </svg>
        </div>
        <div className="flex w-[54px] justify-center"><Copilot /></div>
      </div>
    </div>
  );
}

export default function App() {
  return (
    <div className="flex h-[1080px] w-[1920px] flex-col overflow-hidden bg-[#c5c3d9] font-['Open_Sans',sans-serif]">
      <TabStrip />
      <Toolbar />
      <Bookmarks />
      <WebPage />
      <Taskbar />
    </div>
  );
}
